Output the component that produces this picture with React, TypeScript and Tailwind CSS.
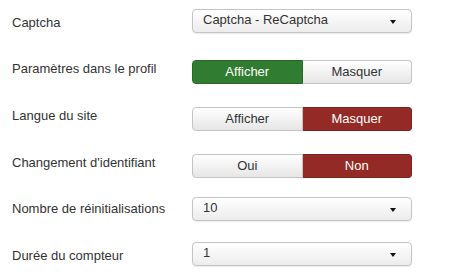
const font = { fontFamily: '"Liberation Sans", Arial, sans-serif' };

function Label({ text, pad }: { text: string; pad: string }) {
  return <div className={`w-[180px] shrink-0 text-[13px] leading-[18px] text-[#333] ${pad}`}>{text}</div>;
}

function Select({ value }: { value: string }) {
  return (
    <div className="flex h-[24px] w-[220px] items-center justify-between rounded-[4px] border border-[#c4c4c4] bg-gradient-to-b from-white to-[#ececec] pl-[10px] pr-[15px] text-[13px] text-[#333] shadow-[0_1px_1px_rgba(0,0,0,0.08)]">
      <span className="-mt-[2px] leading-[18px]">{value}</span>
      <svg width="6" height="4" viewBox="0 0 6 4" className="mt-[2px]">
        <path d="M0 0h6L3 4z" fill="#111" />
      </svg>
    </div>
  );
}

function Toggle({ left, right, active, tone }: { left: string; right: string; active: "left" | "right"; tone: "green" | "red" }) {
  const on = tone === "green" ? "bg-[#307c30] text-white border-[#276a27]" : "bg-[#942a25] text-white border-[#7f231f]";
  const off = "bg-gradient-to-b from-white to-[#e6e6e6] text-[#333] border-[#c4c4c4]";
  return (
    <div className="flex h-[24px] w-[220px] text-[13px]">
      <div className={`flex flex-1 items-center justify-center rounded-l-[4px] border ${active === "left" ? on : off}`}>{left}</div>
      <div className={`flex flex-1 items-center justify-center rounded-r-[4px] border border-l-0 ${active === "right" ? on : off}`}>{right}</div>
    </div>
  );
}

export default function App() {
  return (
    <div className="h-[280px] w-[450px] bg-white pl-[12px]" style={font}>
      <div className="flex items-start pt-[9px]">
        <Label text="Captcha" pad="pt-[5px]" />
        <Select value="Captcha - ReCaptcha" />
      </div>
      <div className="mt-[27px] flex items-start">
        <Label text="Paramètres dans le profil" pad="pt-0" />
        <Toggle left="Afficher" right="Masquer" active="left" tone="green" />
      </div>
      <div className="mt-[23px] flex items-start">
        <Label text="Langue du site" pad="pt-0" />
        <Toggle left="Afficher" right="Masquer" active="right" tone="red" />
      </div>
      <div className="mt-[23px] flex items-start">
        <Label text="Changement d'identifiant" pad="pt-0" />
        <Toggle left="Oui" right="Non" active="right" tone="red" />
      </div>
      <div className="mt-[19px] flex items-start">
        <Label text="Nombre de réinitialisations" pad="pt-[3px]" />
        <Select value="10" />
      </div>
      <div className="mt-[21px] flex items-start">
        <Label text="Durée du compteur" pad="pt-[5px]" />
        <Select value="1" />
      </div>
    </div>
  );
}
